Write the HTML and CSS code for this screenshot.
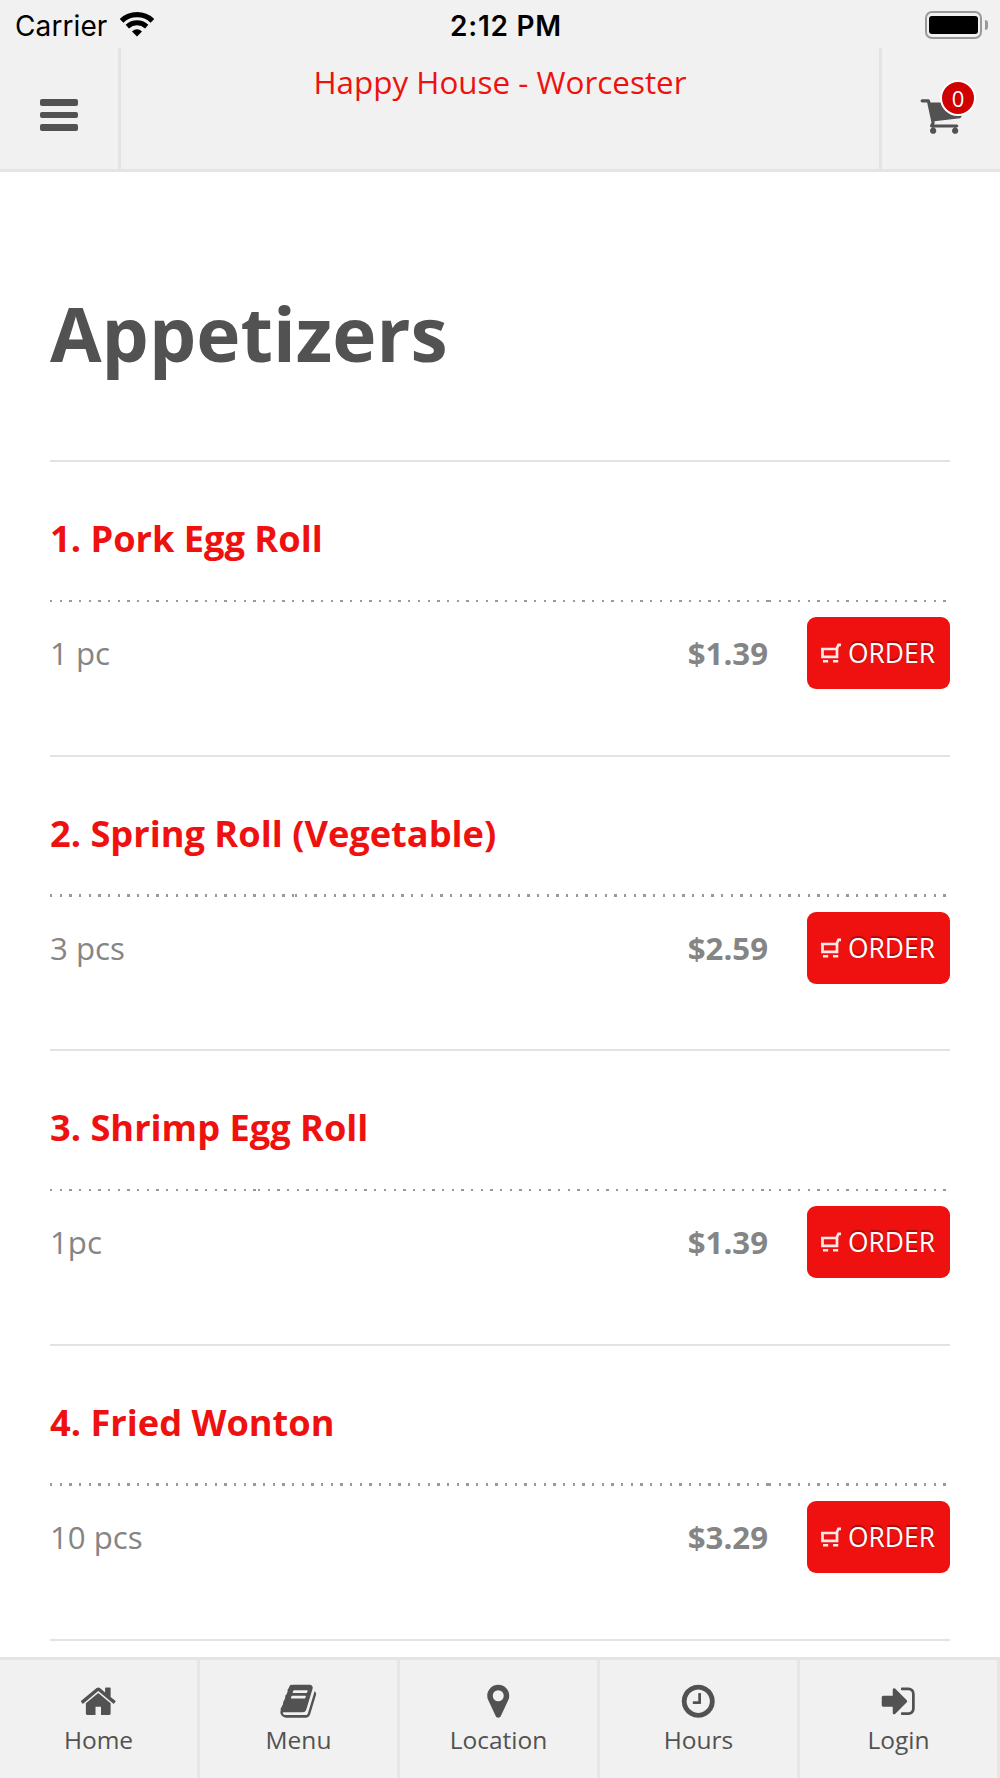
FILE: index.html
```html
<!DOCTYPE html>
<html lang="en">
	<head>
		<meta charset="UTF-8" />
		<meta name="viewport" content="width=device-width, initial-scale=1" />
		<title>Happy House - Worcester</title>
		<link rel="stylesheet" href="styles.css">
	</head>
	<body>
		<svg class="sprite" width="0" height="0">
			<symbol id="order-cart" viewBox="0 0 20 20">
				<path d="M1.500 6V13.800H16V5L17.500 1.800H20M0 6H16" fill="none" stroke="#fff" stroke-opacity=".9" stroke-width="2.700" />
				<path d="M2 17h5.200v2.600H2zM12 17h5.200v2.600h-5.200z" fill="#fff" fill-opacity=".9" />
			</symbol>
		</svg>

		<div class="status-bar">
			<div class="carrier">
				<span>Carrier</span>
				<svg class="wifi" viewBox="0 0 34 25">
					<path d="M1.600 8.800C10 .6 24 .6 32.400 8.800" fill="none" stroke="#000" stroke-width="5.200" />
					<path d="M7.300 14.600C13 9.600 21 9.600 26.700 14.600" fill="none" stroke="#000" stroke-width="5" />
					<path d="M12 19.500Q17 15 22 19.500L17 24.600z" />
				</svg>
			</div>
			<div class="time">2:12 PM</div>
			<div class="battery">
				<span class="battery-body"><span class="battery-level"></span></span>
				<span class="battery-tip"></span>
			</div>
		</div>

		<header>
			<a class="header-btn menu-btn" href="#">
				<span class="bar"></span>
				<span class="bar"></span>
				<span class="bar"></span>
			</a>
			<h1 class="site-name">Happy House - Worcester</h1>
			<a class="header-btn cart-btn" href="#">
				<svg class="cart-icon" viewBox="0 0 1792 1792"><path d="M704 1536q0 52-38 90t-90 38-90-38-38-90 38-90 90-38 90 38 38 90zm896 0q0 52-38 90t-90 38-90-38-38-90 38-90 90-38 90 38 38 90zm128-1088v512q0 24-16.500 42.500t-40.500 21.500l-1044 122q13 60 13 70 0 16-24 64h920q26 0 45 19t19 45-19 45-45 19h-1024q-26 0-45-19t-19-45q0-11 8-31.500t16-36 21.500-40 15.500-29.500l-177-823h-204q-26 0-45-19t-19-45 19-45 45-19h256q16 0 28.500 6.500t19.500 15.500 13 24.500 8 26 5.500 29.500 4.500 26h1201q26 0 45 19t19 45z" /></svg>
				<span class="cart-count">0</span>
			</a>
		</header>

		<main>
			<h2>Appetizers</h2>

			<section class="item">
				<h3>1. Pork Egg Roll</h3>
				<div class="dots">
					<span class="dots-fill"></span>
					<span class="dots-order"></span>
				</div>
				<div class="item-row">
					<span class="portion">1 pc</span>
					<span class="price">$1.39</span>
					<button class="order"><svg viewBox="0 0 20 20"><use href="#order-cart" /></svg>ORDER</button>
				</div>
			</section>

			<section class="item">
				<h3>2. Spring Roll (Vegetable)</h3>
				<div class="dots">
					<span class="dots-name-lg"></span>
					<span class="dots-fill"></span>
					<span class="dots-order"></span>
				</div>
				<div class="item-row">
					<span class="portion">3 pcs</span>
					<span class="price">$2.59</span>
					<button class="order"><svg viewBox="0 0 20 20"><use href="#order-cart" /></svg>ORDER</button>
				</div>
			</section>

			<section class="item">
				<h3>3. Shrimp Egg Roll</h3>
				<div class="dots">
					<span class="dots-name"></span>
					<span class="dots-fill"></span>
					<span class="dots-order"></span>
				</div>
				<div class="item-row">
					<span class="portion">1pc</span>
					<span class="price">$1.39</span>
					<button class="order"><svg viewBox="0 0 20 20"><use href="#order-cart" /></svg>ORDER</button>
				</div>
			</section>

			<section class="item">
				<h3>4. Fried Wonton</h3>
				<div class="dots">
					<span class="dots-fill"></span>
					<span class="dots-order"></span>
				</div>
				<div class="item-row">
					<span class="portion">10 pcs</span>
					<span class="price">$3.29</span>
					<button class="order"><svg viewBox="0 0 20 20"><use href="#order-cart" /></svg>ORDER</button>
				</div>
			</section>
			<hr />
		</main>

		<nav>
			<a href="#">
				<svg viewBox="0 0 1792 1792"><path d="M1472 992v480q0 26-19 45t-45 19h-384v-384h-256v384h-384q-26 0-45-19t-19-45v-480q0-1 .5-3t.5-3l575-474 575 474q1 2 1 6zm223-69l-62 74q-8 9-21 11h-3q-13 0-21-7l-692-577-692 577q-12 8-24 7-13-2-21-11l-62-74q-8-10-7-23.5t11-21.5l719-599q32-26 76-26t76 26l244 204v-195q0-14 9-23t23-9h192q14 0 23 9t9 23v408l219 182q10 8 11 21.5t-7 23.5z" /></svg>
				Home
			</a>
			<a href="#">
				<svg viewBox="0 0 1792 1792"><path d="M1703 478q40 57 18 129l-275 906q-19 64-76.5 107.5t-122.5 43.5h-923q-77 0-148.5-53.5t-99.5-131.5q-24-67-2-127 0-4 3-27t4-37q1-8-3-21.5t-3-19.5q2-11 8-21t16.5-23.5 16.5-23.5q23-38 45-91.5t30-91.5q3-10 .5-30t-.5-28q3-11 17-28t17-23q21-36 42-92t25-90q1-9-2.5-32t.5-28q4-13 22-30.5t22-22.5q19-26 42.5-84.5t27.5-96.5q1-8-3-25.5t-2-26.5q2-8 9-18t18-23 17-21q8-12 16.5-30.5t15-35 16-36 19.5-32 26.5-23.5 36-11.5 47.5 5.5l-1 3q38-9 51-9h761q74 0 114 56t18 130l-274 906q-36 119-71.5 153.5t-128.5 34.5h-869q-27 0-38 15-11 16-1 43 24 70 144 70h923q29 0 56-15.5t35-41.5l300-987q7-22 5-57 38 15 59 43zm-1064 2q-4 13 2 22.5t20 9.5h608q13 0 25.5-9.5t16.5-22.5l21-64q4-13-2-22.5t-20-9.5h-608q-13 0-25.5 9.5t-16.5 22.5zm-83 256q-4 13 2 22.5t20 9.5h608q13 0 25.5-9.5t16.5-22.5l21-64q4-13-2-22.5t-20-9.5h-608q-13 0-25.5 9.5t-16.5 22.5z" /></svg>
				Menu
			</a>
			<a href="#">
				<svg viewBox="0 0 1792 1792"><path d="M1152 640q0-106-75-181t-181-75-181 75-75 181 75 181 181 75 181-75 75-181zm256 0q0 109-33 179l-364 774q-16 33-47.5 52t-67.5 19-67.5-19-46.5-52l-365-774q-33-70-33-179 0-212 150-362t362-150 362 150 150 362z" /></svg>
				Location
			</a>
			<a href="#">
				<svg viewBox="0 0 1792 1792"><path d="M1024 544v448q0 14-9 23t-23 9h-320q-14 0-23-9t-9-23v-64q0-14 9-23t23-9h224v-352q0-14 9-23t23-9h64q14 0 23 9t9 23zm416 352q0-148-73-273t-198-198-273-73-273 73-198 198-73 273 73 273 198 198 273 73 273-73 198-198 73-273zm224 0q0 209-103 385.5t-279.5 279.5-385.5 103-385.5-103-279.5-279.5-103-385.5 103-385.5 279.5-279.5 385.5-103 385.5 103 279.5 279.5 103 385.5z" /></svg>
				Hours
			</a>
			<a href="#">
				<svg viewBox="0 0 1792 1792"><path d="M1312 896q0 26-19 45l-544 544q-19 19-45 19t-45-19-19-45v-288h-448q-26 0-45-19t-19-45v-384q0-26 19-45t45-19h448v-288q0-26 19-45t45-19 45 19l544 544q19 19 19 45zm352-352v704q0 119-84.5 203.5t-203.5 84.5h-320q-13 0-22.5-9.5t-9.5-22.5q0-4-1-20t-.5-26.5 3-23.5 10-19.5 20.5-6.5h320q66 0 113-47t47-113v-704q0-66-47-113t-113-47h-312l-11.5-1-11.5-3-8-5.5-7-9-2-13.5q0-4-1-20t-.5-26.5 3-23.5 10-19.5 20.5-6.5h320q119 0 203.5 84.5t84.5 203.5z" /></svg>
				Login
			</a>
		</nav>
	</body>
</html>
```

FILE: styles.css
```css
* {
	box-sizing: border-box;
	margin: 0;
	padding: 0;
}

body {
	display: flex;
	flex-direction: column;
	height: 1778px;
	overflow: hidden;
	font-family: "Open Sans", sans-serif;
	background-color: #fff;
	color: #525252;
}

a {
	color: inherit;
	text-decoration: none;
}

svg {
	fill: #525252;
}

.sprite {
	position: absolute;
}

/* status bar */
.status-bar {
	display: grid;
	grid-template-columns: 1fr auto 1fr;
	align-items: center;
	height: 48px;
	padding: 1px 12px 0 15px;
	background-color: #f1f1f1;
	color: #000;
	font-family: Inter, sans-serif;
	font-size: 28px;
}

.carrier {
	display: flex;
	align-items: center;
	gap: 13px;
	padding-top: 3px;
	letter-spacing: 0.1px;
}

.wifi {
	width: 34px;
	height: 25px;
	margin-bottom: 4px;
	fill: #000;
}

.time {
	padding: 3px 0 0 9px;
	font-weight: 600;
	letter-spacing: 0.75px;
}

.battery {
	display: flex;
	align-items: center;
	justify-content: flex-end;
	gap: 3px;
}

.battery-body {
	width: 57px;
	height: 28px;
	padding: 3px 2px;
	border: 2px solid #999;
	border-radius: 7px;
}

.battery-level {
	display: block;
	width: 49px;
	height: 18px;
	border-radius: 3px;
	background-color: #000;
}

.battery-tip {
	width: 3px;
	height: 10px;
	border-radius: 0 4px 4px 0;
	background-color: #999;
}

/* header */
header {
	display: flex;
	height: 124px;
	border-bottom: 3px solid #e4e4e4;
	background-color: #f1f1f1;
}

.header-btn {
	position: relative;
	width: 121px;
}

.menu-btn {
	display: flex;
	flex-direction: column;
	gap: 6px;
	padding: 51px 0 0 40px;
	border-right: 3px solid #e4e4e4;
}

.bar {
	width: 38px;
	height: 6.7px;
	border-radius: 2px;
	background-color: #525252;
}

.site-name {
	flex: 1;
	padding-top: 12px;
	text-align: center;
	font-size: 31.4px;
	font-weight: 400;
	line-height: 44px;
	color: #ee110f;
}

.cart-btn {
	padding: 44.6px 0 0 37px;
	border-left: 3px solid #e4e4e4;
}

.cart-icon {
	display: block;
	width: 44px;
	height: 44px;
}

.cart-count {
	position: absolute;
	top: 32px;
	left: 58px;
	width: 36px;
	height: 36px;
	border: 2px solid #fff;
	border-radius: 50%;
	background-color: #d00000;
	color: #fff;
	font-size: 22px;
	line-height: 32px;
	text-align: center;
}

/* menu list */
main {
	flex: 1;
	min-height: 0;
	padding: 0 50px;
	overflow: hidden;
}

h2 {
	height: 288px;
	padding-top: 110px;
	font-size: 74.8px;
	line-height: 102px;
}

.item {
	height: 294.67px;
	border-top: 2px solid #e3e3e3;
}

h3 {
	padding-top: 51px;
	font-size: 36.2px;
	line-height: 50px;
	color: #ee110f;
}

/* dotted rule, each cell restarts the dots */
.dots {
	display: flex;
	height: 2.5px;
	margin-top: 36.5px;
}

.dots span {
	background: repeating-linear-gradient(to right, #999 0 2.3px, transparent 2.3px 9.68px);
}

.dots-fill {
	flex: 1;
}

.dots-name {
	width: 208px;
}

.dots-name-lg {
	width: 245px;
}

.dots-order {
	width: 181px;
}

.item-row {
	display: flex;
	align-items: center;
	margin-top: 15px;
	font-size: 31.2px;
	color: #858585;
}

.portion {
	flex: 1;
}

.price {
	font-weight: 700;
	margin-right: 39px;
}

.order {
	display: flex;
	align-items: center;
	gap: 7px;
	width: 143px;
	height: 72px;
	padding-left: 14px;
	border: none;
	border-radius: 9px;
	background-color: #ee110f;
	color: #fff;
	font-family: inherit;
	font-size: 26.4px;
	text-shadow: 0 -2px 1px rgba(0, 0, 0, 0.3);
}

.order svg {
	width: 20px;
	height: 20px;
}

hr {
	border: none;
	border-top: 2px solid #e3e3e3;
}

/* bottom tabs */
nav {
	display: flex;
	height: 121px;
	border-top: 3px solid #e4e4e4;
	background-color: #f1f1f1;
}

nav a {
	display: flex;
	flex: 1;
	flex-direction: column;
	align-items: center;
	padding-top: 22px;
	border-right: 3px solid #e6e6e6;
	font-size: 24.5px;
	line-height: 38px;
}

nav svg {
	width: 38.5px;
	height: 38.5px;
}
```
